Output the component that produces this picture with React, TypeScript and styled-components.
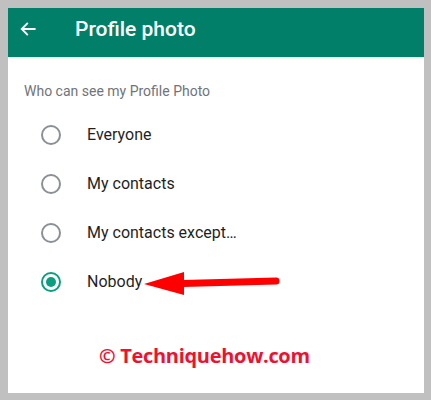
import * as React from 'react'
import styled, {createGlobalStyle} from 'styled-components'

const GlobalStyle = createGlobalStyle`
  html, body {
    margin: 0;
    padding: 0;
    background: #c0c0c0;
  }
  body {
    font-family: Roboto, "Noto Sans", sans-serif;
  }
`

const Frame = styled.div`
  margin: 8px 7px 0 8px;
  height: 385px;
  background: #fff;
  display: flex;
  flex-direction: column;
  overflow: hidden;
`

const AppBar = styled.header`
  height: 49px;
  box-sizing: border-box;
  padding: 0 0 8px 7px;
  background: #017f69;
  display: flex;
  align-items: center;
  box-shadow: 0 1px 2px rgba(0, 0, 0, 0.12);
  position: relative;
  z-index: 1;
`

const BackButton = styled.button`
  width: 26px;
  height: 26px;
  border: none;
  background: none;
  padding: 0;
  display: flex;
  align-items: center;
  justify-content: center;
  color: #fff;
`

const Title = styled.h1`
  margin: 0 0 0 34px;
  font-size: 21px;
  font-weight: 500;
  color: #fff;
`

const Section = styled.section`
  display: flex;
  flex-direction: column;
  padding-top: 25px;
`

const SectionLabel = styled.div`
  font-size: 14px;
  color: #6f7479;
  padding-left: 16px;
  height: 18px;
  line-height: 18px;
  margin-bottom: 10px;
`

const Option = styled.label`
  height: 49px;
  display: flex;
  align-items: center;
  padding-left: 33px;
  font-size: 16px;
  color: #1f1f1f;
`

const Radio = styled.span<{checked?: boolean}>`
  width: 20px;
  height: 20px;
  box-sizing: border-box;
  border-radius: 50%;
  border: 2px solid ${p => (p.checked ? '#0a9f7f' : '#8a9095')};
  display: flex;
  align-items: center;
  justify-content: center;
  margin-right: 26px;

  &::after {
    content: '';
    display: ${p => (p.checked ? 'block' : 'none')};
    width: 10px;
    height: 10px;
    border-radius: 50%;
    background: #0a9f7f;
  }
`

const Pointer = styled.svg`
  margin-left: 2px;
  margin-top: 4px;
`

const Watermark = styled.div`
  margin-top: 36px;
  padding-left: 91px;
  font-family: "Open Sans", "DejaVu Sans", sans-serif;
  font-weight: bold;
  font-size: 20px;
  letter-spacing: -0.3px;
  color: #f01030;
`

const options = ['Everyone', 'My contacts', 'My contacts except…', 'Nobody']

const App = () => {
  return (
    <>
      <GlobalStyle />
      <Frame>
        <AppBar>
          <BackButton aria-label="Back">
            <svg width="20" height="20" viewBox="0 0 24 24" fill="none" stroke="#fff" strokeWidth="2.2" strokeLinecap="square">
              <path d="M20 12H5M11 5.5L4.5 12L11 18.5" />
            </svg>
          </BackButton>
          <Title>Profile photo</Title>
        </AppBar>
        <Section>
          <SectionLabel>Who can see my Profile Photo</SectionLabel>
          {options.map(option => (
            <Option key={option}>
              <Radio checked={option === 'Nobody'} />
              {option}
              {option === 'Nobody' && (
                <Pointer width="140" height="26" viewBox="0 0 140 26">
                  <path d="M39 12.5 L132 10" stroke="#f00" strokeWidth="7" strokeLinecap="round" />
                  <polygon points="0,13 40,1 40,24" fill="#f00" />
                </Pointer>
              )}
            </Option>
          ))}
        </Section>
        <Watermark>© Techniquehow.com</Watermark>
      </Frame>
    </>
  )
}

export default App
